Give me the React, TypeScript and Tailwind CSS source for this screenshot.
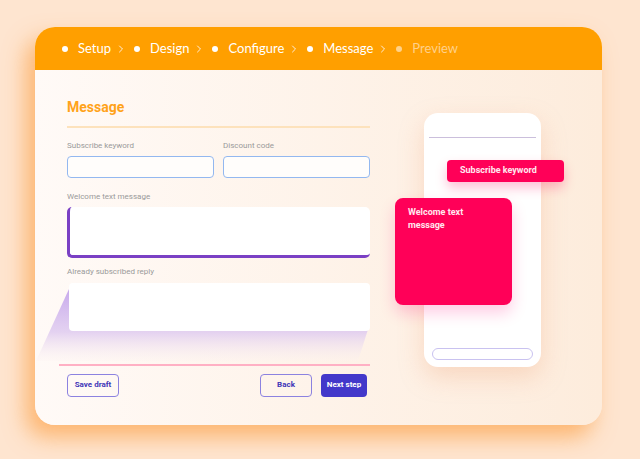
import { ChevronRight } from 'lucide-react';

const steps = [
  { label: 'Setup', done: true },
  { label: 'Design', done: true },
  { label: 'Configure', done: true },
  { label: 'Message', done: true },
  { label: 'Preview', done: false },
];

const Field = ({ label }: { label: string }) => (
  <div className="flex flex-col flex-1">
    <span className="text-[8px] leading-[12px] text-[#9a9a9a]">{label}</span>
    <div className="mt-[4px] h-[22px] rounded-[4px] border border-[#93b8f0] bg-[#fffdfb]" />
  </div>
);

const App = () => {
  return (
    <div
      className="w-[640px] h-[459px] bg-[#fee5d0] pt-[27px] pl-[35px] overflow-hidden"
      style={{ fontFamily: 'Roboto, "Liberation Sans", sans-serif' }}
    >
      <div className="w-[567px] h-[398px] rounded-[20px] bg-linear-to-r from-[#fffaf7] to-[#fdecdc] shadow-[-9px_12px_22px_rgba(252,165,80,0.75)] flex flex-col">
        {/* stepper */}
        <div
          className="h-[43px] shrink-0 rounded-t-[20px] bg-[#ff9f00] flex items-center pl-[27px]"
          style={{ fontFamily: 'Lato, "Open Sans", sans-serif' }}
        >
          {steps.map((s, i) => (
            <div key={s.label} className="flex items-center">
              <span
                className={`w-[6px] h-[6px] rounded-full ${s.done ? 'bg-white' : 'bg-[#ffd28a]'}`}
              />
              <span
                className={`ml-[10px] text-[13px] ${s.done ? 'text-white' : 'text-[#ffd08a]'}`}
              >
                {s.label}
              </span>
              {i < steps.length - 1 && (
                <ChevronRight className="ml-[4px] mr-[7px] w-[12px] h-[12px] text-[#ffeeda]" strokeWidth={2} />
              )}
            </div>
          ))}
        </div>

        {/* body */}
        <div className="flex flex-1 pl-[32px] pt-[27px]">
          <div className="w-[303px] flex flex-col">
            <h2 className="text-[14px] leading-[20px] font-bold text-[#ffa31a]">Message</h2>
            <div className="mt-[9px] h-[2px] bg-[#fde2bc]" />

            <div className="mt-[12px] flex gap-[9px]">
              <Field label="Subscribe keyword" />
              <Field label="Discount code" />
            </div>

            <span className="mt-[13px] text-[8px] leading-[12px] text-[#9a9a9a]">Welcome text message</span>
            <div className="mt-[4px] h-[51px] rounded-[5px] bg-white border-l-[3px] border-b-[3px] border-[#7a40c4]" />

            <span className="mt-[8px] text-[8px] leading-[12px] text-[#9a9a9a]">Already subscribed reply</span>
            <div className="relative mt-[5px] ml-[2px] h-[48px]">
              <svg
                className="absolute left-[-33px] top-0"
                width="336"
                height="80"
                viewBox="0 0 336 80"
              >
                <defs>
                  <linearGradient id="fade" x1="0" y1="0" x2="0" y2="1">
                    <stop offset="0" stopColor="#c7a9ec" stopOpacity="1" />
                    <stop offset="0.6" stopColor="#dfcbf0" stopOpacity="0.85" />
                    <stop offset="1" stopColor="#fbf0f0" stopOpacity="0.2" />
                  </linearGradient>
                </defs>
                <polygon points="33,6 334,40 322,78 0,78" fill="url(#fade)" />
              </svg>
              <div className="relative h-full rounded-[4px] bg-white" />
            </div>

            <div className="mt-[33px] -ml-[8px] h-[1.5px] bg-[#ffb0c4]" />

            <div className="mt-[8px] pr-[3px] flex items-center">
              <button className="w-[52px] h-[23px] rounded-[4px] border border-[#8c82e0] text-[8px] font-bold text-[#3f36b8]">
                Save draft
              </button>
              <div className="flex-1" />
              <button className="w-[52px] h-[23px] rounded-[4px] border border-[#8c82e0] text-[8px] font-bold text-[#3f36b8]">
                Back
              </button>
              <button className="ml-[9px] w-[46px] h-[23px] rounded-[4px] bg-[#4338ca] text-[8px] font-bold text-white">
                Next step
              </button>
            </div>
          </div>

          {/* phone preview */}
          <div className="ml-[54px] mt-[16px]">
            <div className="relative w-[117px] h-[254px] rounded-[14px] bg-white shadow-[0_10px_24px_rgba(240,170,130,0.35)] flex flex-col">
              <div className="mt-[24px] mx-[5px] h-[1px] bg-[#cbbfdc]" />
              <div className="flex-1" />
              <div className="mb-[7px] mx-[8px] h-[12px] rounded-full border border-[#c9c2f0]" />

              <div className="absolute left-[23px] top-[47px] w-[117px] h-[22px] rounded-[4px] bg-[#ff0058] shadow-[0_6px_12px_rgba(255,0,88,0.25)] flex items-center pl-[13px] text-[9px] font-bold text-[#ffe8ef]">
                Subscribe keyword
              </div>
              <div className="absolute left-[-29px] top-[85px] w-[117px] h-[107px] rounded-[8px] bg-[#ff0058] shadow-[0_8px_16px_rgba(255,0,120,0.2)] pl-[13px] pt-[8px] text-[9px] leading-[13px] font-bold text-[#ffe8ef]">
                Welcome text
                <br />
                message
              </div>
            </div>
          </div>
        </div>
      </div>
    </div>
  );
};

export default App;
